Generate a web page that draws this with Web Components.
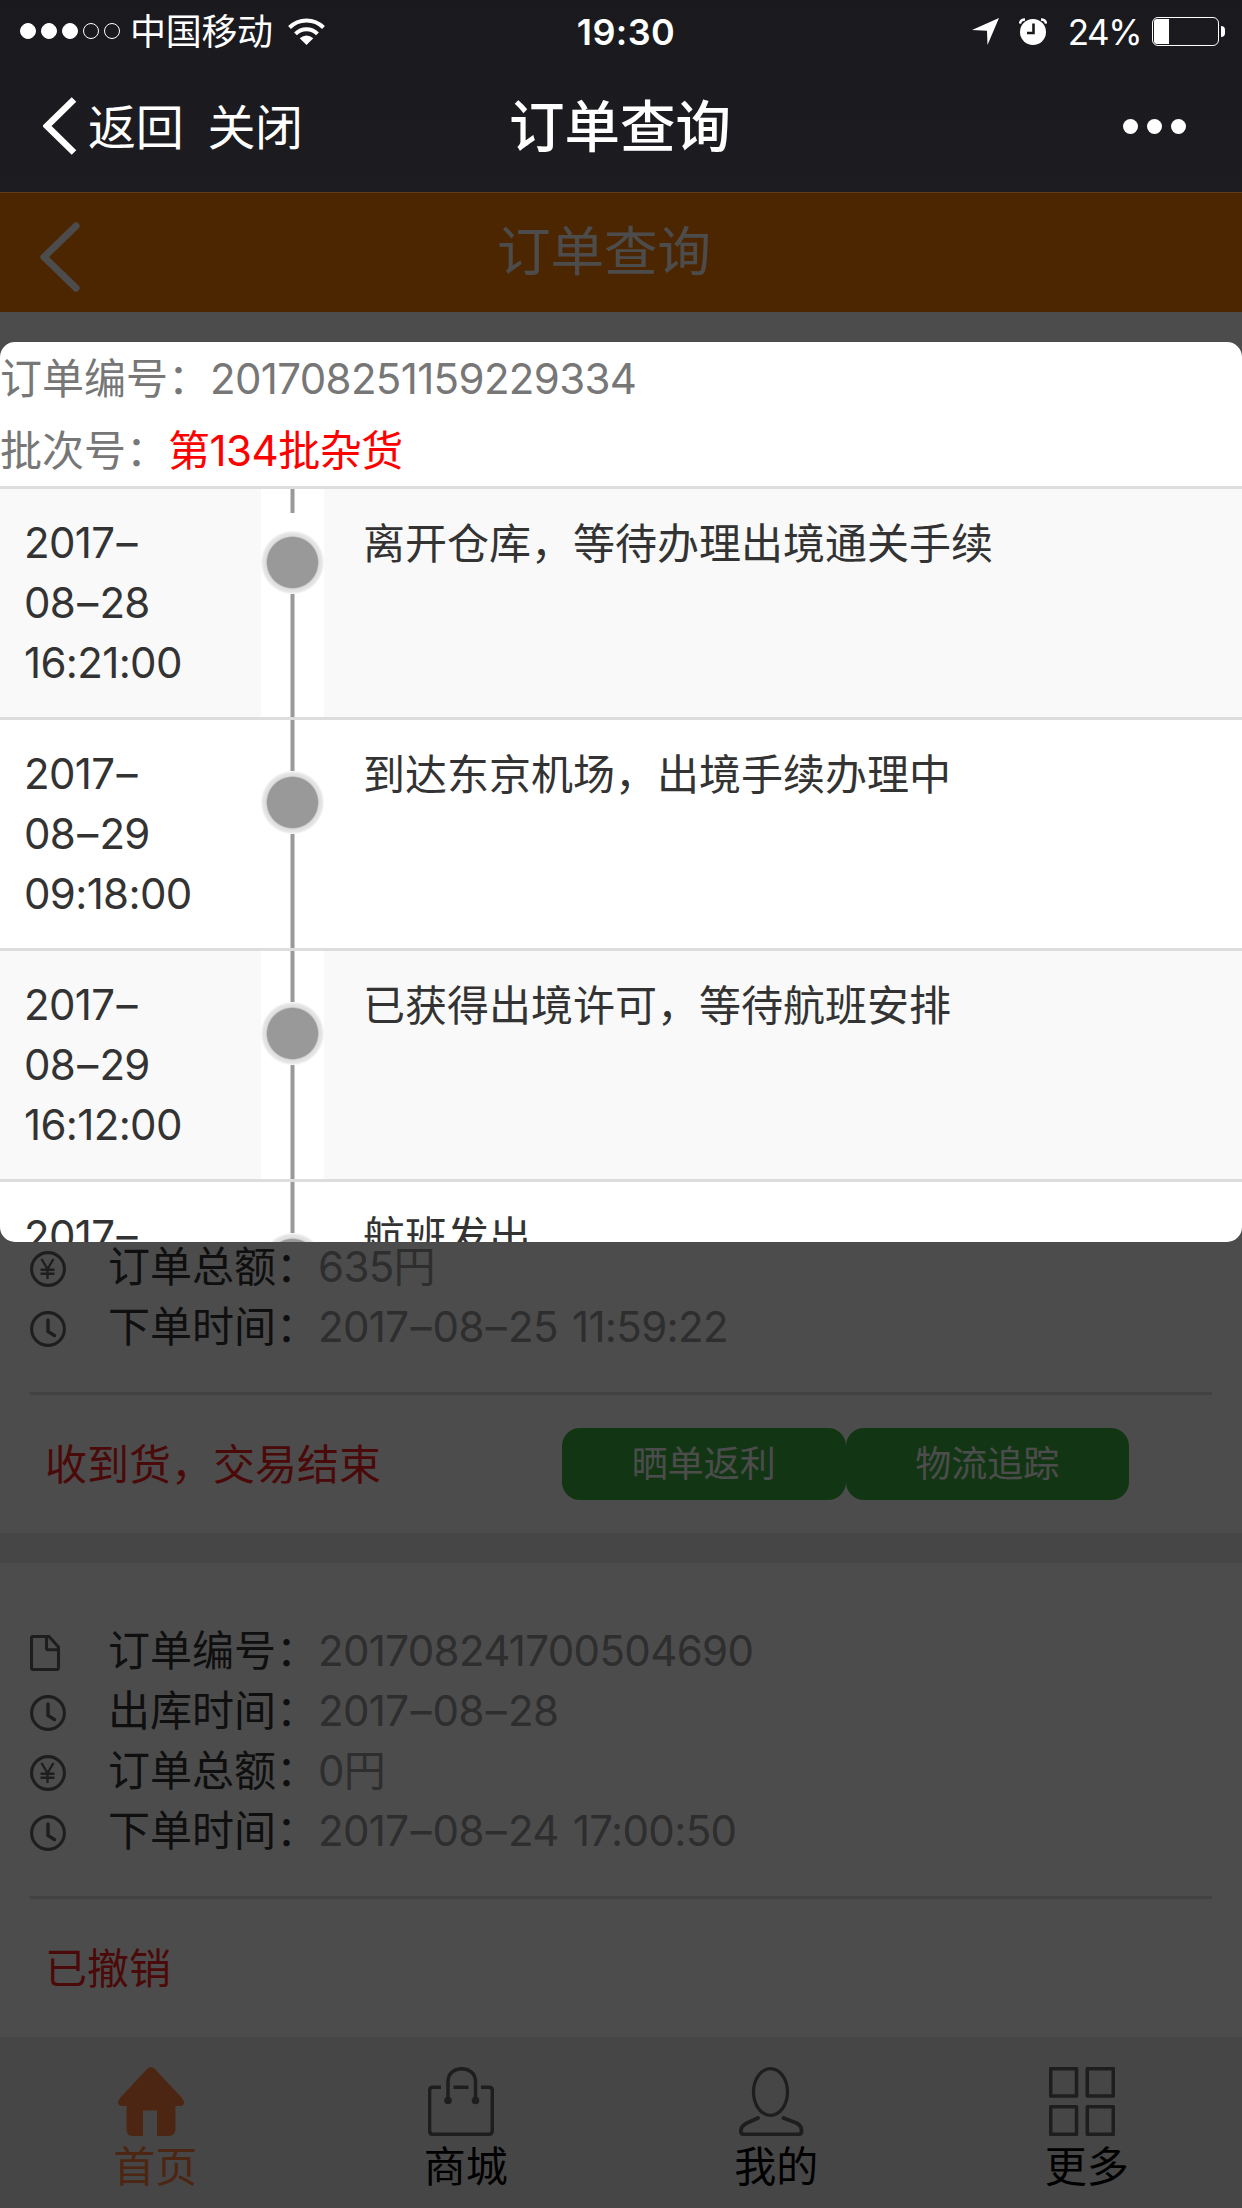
<!DOCTYPE html>
<html lang="zh-CN">
<head>
<meta charset="utf-8">
<title>订单查询</title>
<style>
  :root {
    --color-mask: rgba(0, 0, 0, 0.7);
    --color-line: #ddd;
    --color-gap: #ebebeb;
    --color-icon: #666;
  }

  body {
    margin: 0;
    width: 1242px;
    height: 2208px;
    overflow: hidden;
    background: #fff;
    font-family: Inter, "Noto Sans CJK SC", sans-serif;
    font-size: 42px;
    line-height: 60px;
    color: #333;
  }
</style>
</head>
<body>
<phone-screen>
  <status-bar slot="top" carrier="中国移动" time="19:30" battery="24"></status-bar>
  <nav-bar slot="top" back="返回" close="关闭">订单查询</nav-bar>

  <page-header>订单查询</page-header>
  <order-list>
    <order-card status="收到货，交易结束">
      <order-field icon="yen" label="订单总额：" value="635円"></order-field>
      <order-field icon="clock" label="下单时间：" value="2017–08–25 11:59:22"></order-field>
      <pill-button slot="actions">晒单返利</pill-button>
      <pill-button slot="actions">物流追踪</pill-button>
    </order-card>
    <order-card status="已撤销">
      <order-field icon="file" label="订单编号：" value="201708241700504690"></order-field>
      <order-field icon="clock" label="出库时间：" value="2017–08–28"></order-field>
      <order-field icon="yen" label="订单总额：" value="0円"></order-field>
      <order-field icon="clock" label="下单时间：" value="2017–08–24 17:00:50"></order-field>
    </order-card>
  </order-list>
  <tab-bar>
    <tab-item icon="home" active>首页</tab-item>
    <tab-item icon="bag">商城</tab-item>
    <tab-item icon="user">我的</tab-item>
    <tab-item icon="grid">更多</tab-item>
  </tab-bar>

  <track-dialog slot="overlay" number="201708251159229334" batch="第134批杂货">
    <track-step first date="2017–" day="08–28" time="16:21:00">离开仓库，等待办理出境通关手续</track-step>
    <track-step date="2017–" day="08–29" time="09:18:00">到达东京机场，出境手续办理中</track-step>
    <track-step date="2017–" day="08–29" time="16:12:00">已获得出境许可，等待航班安排</track-step>
    <track-step date="2017–">航班发出</track-step>
  </track-dialog>
</phone-screen>

<script>
// Icon drawings, keyed by name
const ICONS = {
  yen: { w: 36, h: 36, body: `
    <circle cx="18" cy="18" r="16.4" stroke-width="3.1"/>
    <path d="M11.5 8 L17.5 18 L23.5 8 M17.5 18 V28 M10.5 18.8 H24.5 M10.5 22.8 H24.5" stroke-width="2.4"/>` },
  clock: { w: 36, h: 36, body: `
    <circle cx="18" cy="18" r="16.4" stroke-width="3.1"/>
    <path d="M18 9 V20.5 L24.5 24.5" stroke-width="3.4" stroke-linecap="round"/>` },
  file: { w: 36, h: 36, body: `
    <path d="M3 1.5 H19 L28.5 12 V33 Q28.5 34.5 27 34.5 H3 Q1.5 34.5 1.5 33 V3 Q1.5 1.5 3 1.5 Z M16.5 2 V13 Q16.5 14.8 18.3 14.8 H28.5" stroke-width="3.1"/>` },
  home: { w: 66, h: 69, body: `
    <path fill="currentColor" stroke="none" d="M29.5 1.5 Q33 -1.5 36.5 1.5 L64 31 Q66 33.5 66 36 Q65.5 39 62 39 H57.5 V62 Q57 69 51 69 H39 V43.5 H25 V69 H14 Q8.5 68.5 8.5 62 V39 H4 Q0.5 39 0 36 Q0 33.5 2 31 Z"/>` },
  bag: { w: 66, h: 69, body: `
    <path d="M13 20.2 H5 Q1.6 20.2 1.6 23.5 V63.5 Q1.6 67.3 5 67.3 H61 Q64.3 67.3 64.3 63.5 V23.5 Q64.3 20.2 61 20.2 H53 M25.5 20.2 H40.5 M20 33 V14.5 C20 -2.6 47.5 -2.6 47.5 14.5 V33" stroke-width="3.5"/>
    <circle cx="20" cy="33.5" r="3.8" fill="currentColor" stroke="none"/>
    <circle cx="47.5" cy="33.5" r="3.8" fill="currentColor" stroke="none"/>` },
  user: { w: 66, h: 69, body: `
    <ellipse cx="31.5" cy="25" rx="17" ry="23.3" stroke-width="3.3"/>
    <path d="M19 51 L7 56.5 Q1.8 59.5 1.8 64.5 Q2 67.3 5 67.3 H59 Q62.5 67.3 62.5 64.5 Q63 59 57.5 56 L44.5 51" stroke-width="3.8" stroke-linecap="round"/>` },
  grid: { w: 66, h: 69, body: `
    <path d="M1.7 1.7 H27.5 V29 H1.7 Z M38.3 1.7 H64.3 V29 H38.3 Z M1.7 39.8 H27.5 V67.3 H1.7 Z M38.3 39.8 H64.3 V67.3 H38.3 Z" stroke-width="3.6" stroke-linejoin="round"/>` },
  wifi: { w: 37, h: 27, body: `
    <path d="M1.5 9.5 A24 24 0 0 1 35.5 9.5" stroke-width="4"/>
    <path d="M7.5 15.8 A15.6 15.6 0 0 1 29.5 15.8" stroke-width="4"/>
    <path fill="currentColor" stroke="none" d="M18.5 27 L11.7 20.2 Q18.5 15 25.3 20.2 Z"/>` },
  location: { w: 27, h: 27, body: `
    <path fill="currentColor" stroke="none" d="M27 0 L15.5 27 L15 12.8 L0 12 Z"/>` },
  alarm: { w: 28, h: 27, body: `
    <circle cx="14" cy="14" r="13" fill="currentColor" stroke="none"/>
    <path d="M1 5.5 Q1.5 1.5 6 1.5 M22 1.5 Q26.5 1.5 27 5.5" stroke-width="2.4"/>
    <path d="M14.5 5.5 V15 H8" stroke="#1b1a1f" stroke-width="2.6"/>` },
  back: { w: 34, h: 58, body: `
    <path d="M31 2.5 L4 29 L31 55.5" stroke-width="6.5"/>` },
  chevron: { w: 40, h: 70, body: `
    <path d="M36 4 L4 35 L36 66" stroke-width="7" stroke-linecap="round" stroke-linejoin="round"/>` }
};

/** Base class: opens the shadow root and fills it from template() */
class UiElement extends HTMLElement {
  connectedCallback() {
    if (this.shadowRoot) return;
    this.attachShadow({ mode: 'open' }).innerHTML = this.template().trim();
  }

  attr(name) {
    return this.getAttribute(name) || '';
  }
}

class UiIcon extends UiElement {
  template() {
    const icon = ICONS[this.attr('name')];
    return `
      <style>
        :host { display: block; flex: none; line-height: 0; }
      </style>
      <svg width="${icon.w}" height="${icon.h}" viewBox="0 0 ${icon.w} ${icon.h}" fill="none" stroke="currentColor">${icon.body}</svg>
    `;
  }
}

/** Number or date, set tight with a little air around its dashes */
class NumText extends UiElement {
  template() {
    return `
      <style>
        :host {
          display: inline;
          letter-spacing: -0.65px;
          word-spacing: 3px;
          white-space: nowrap;
        }
        i { font-style: normal; letter-spacing: 0; margin: 0 1.2px 0 2px; }
      </style>${this.attr('value').replace(/–/g, '<i>–</i>')}`;
  }
}

class PhoneScreen extends UiElement {
  template() {
    return `
      <style>
        :host { display: flex; flex-direction: column; width: 1242px; height: 2208px; }
        .top { flex: none; height: 192px; background: linear-gradient(#1a191e, #1d1c21); color: #fff; }
        .view { position: relative; flex: 1; min-height: 0; display: flex; flex-direction: column; }
        .mask {
          position: absolute;
          inset: 0;
          box-sizing: border-box;
          border-top: 1px solid rgba(150, 110, 80, 0.3);
          background: var(--color-mask);
        }
      </style>
      <div class="top"><slot name="top"></slot></div>
      <div class="view">
        <slot></slot>
        <div class="mask"><slot name="overlay"></slot></div>
      </div>
    `;
  }
}

class StatusBar extends UiElement {
  template() {
    const dots = [1, 1, 1, 0, 0].map((on) => `<i class="${on ? 'on' : ''}"></i>`).join('');
    return `
      <style>
        :host {
          display: grid;
          grid-template-columns: 1fr auto 1fr;
          align-items: center;
          height: 60px;
          padding: 0 17px 0 20px;
          font-size: 36px;
          line-height: 60px;
        }
        div { display: flex; align-items: center; }
        .signal { gap: 5px; margin-right: 10px; }
        i { box-sizing: border-box; width: 16px; height: 16px; border: 1.5px solid #fff; border-radius: 50%; }
        i.on { background: #fff; }
        .carrier { padding-top: 2px; letter-spacing: -0.3px; }
        .wifi { margin-left: 15px; }
        .time, .percent { padding-top: 1px; }
        .time { font-weight: 600; padding-left: 7px; letter-spacing: 0.4px; }
        .right { justify-content: flex-end; }
        .alarm { margin: 0 21px 0 20px; }
        .percent { font-size: 35px; letter-spacing: -1.5px; margin-right: 11px; }
        .battery { box-sizing: border-box; width: 67px; height: 29px; padding: 1px; border: 1.5px solid #fff; border-radius: 6px; }
        .level { height: 100%; border-radius: 3px 0 0 3px; background: #fff; }
        .cap { width: 4px; height: 11px; margin-left: 2px; border-radius: 0 4px 4px 0; background: #fff; }
      </style>
      <div class="left">
        <div class="signal">${dots}</div>
        <span class="carrier">${this.attr('carrier')}</span>
        <ui-icon class="wifi" name="wifi"></ui-icon>
      </div>
      <span class="time">${this.attr('time')}</span>
      <div class="right">
        <ui-icon name="location"></ui-icon>
        <ui-icon class="alarm" name="alarm"></ui-icon>
        <span class="percent">${this.attr('battery')}%</span>
        <div class="battery"><div class="level" style="width: ${this.attr('battery')}%"></div></div>
        <div class="cap"></div>
      </div>
    `;
  }
}

class NavBar extends UiElement {
  template() {
    return `
      <style>
        :host {
          display: grid;
          grid-template-columns: 1fr auto 1fr;
          align-items: center;
          height: 132px;
          padding: 0 56px 0 43px;
          font-size: 48px;
        }
        .left { display: flex; align-items: center; margin-right: -13px; }
        .left span { margin-left: 11px; padding-top: 3px; letter-spacing: -0.3px; }
        .left .close { margin-left: 24px; }
        .title { font-size: 55.5px; font-weight: 500; padding: 1px 0 0 11px; }
        .more { display: flex; justify-content: flex-end; gap: 9px; }
        i { width: 15px; height: 15px; border-radius: 50%; background: #fff; }
      </style>
      <div class="left">
        <ui-icon name="back"></ui-icon>
        <span>${this.attr('back')}</span>
        <span class="close">${this.attr('close')}</span>
      </div>
      <div class="title"><slot></slot></div>
      <div class="more"><i></i><i></i><i></i></div>
    `;
  }
}

class PageHeader extends UiElement {
  template() {
    return `
      <style>
        :host {
          flex: none;
          display: grid;
          grid-template-columns: 1fr auto 1fr;
          align-items: center;
          height: 120px;
          padding: 0 74px 0 40px;
          background: #ff8000;
          color: #fff;
          font-size: 53.5px;
        }
        ui-icon { padding-top: 9px; }
      </style>
      <ui-icon name="chevron"></ui-icon>
      <span><slot></slot></span>
    `;
  }
}

class OrderList extends UiElement {
  template() {
    return `
      <style>
        :host {
          flex: 1;
          min-height: 0;
          display: flex;
          flex-direction: column;
          justify-content: flex-end;
          gap: 30px;
          background: linear-gradient(#fff 1100px, var(--color-gap) 0);
        }
      </style>
      <slot></slot>
    `;
  }
}

class OrderCard extends UiElement {
  template() {
    return `
      <style>
        :host { display: block; padding: 57px 30px 0; background: #fff; }
        .foot {
          display: flex;
          align-items: center;
          height: 138px;
          margin-top: 36px;
          padding: 0 83px 0 15px;
          border-top: 3px solid var(--color-line);
        }
        .status { flex: 1; padding-top: 2px; color: #fc2222; }
      </style>
      <slot></slot>
      <div class="foot">
        <span class="status">${this.attr('status')}</span>
        <slot name="actions"></slot>
      </div>
    `;
  }
}

class OrderField extends UiElement {
  template() {
    return `
      <style>
        :host { display: flex; align-items: center; height: 60px; color: #999; }
        ui-icon { margin-right: 42px; padding-top: 5px; color: var(--color-icon); }
        span { padding-top: 1px; }
        .label { color: #333; }
      </style>
      <ui-icon name="${this.attr('icon')}"></ui-icon>
      <span class="label">${this.attr('label')}</span>
      <span><num-text value="${this.attr('value')}"></num-text></span>
    `;
  }
}

class PillButton extends UiElement {
  template() {
    return `
      <style>
        :host {
          width: 283.5px;
          height: 72px;
          border-radius: 18px;
          background: #3cb443;
          color: #fff;
          font-size: 36px;
          line-height: 73px;
          text-align: center;
        }
      </style>
      <slot></slot>
    `;
  }
}

class TabBar extends UiElement {
  template() {
    return `
      <style>
        :host {
          flex: none;
          display: grid;
          grid-template-columns: repeat(4, 1fr);
          height: 171px;
          background: var(--color-gap);
        }
      </style>
      <slot></slot>
    `;
  }
}

class TabItem extends UiElement {
  template() {
    return `
      <style>
        :host { display: flex; flex-direction: column; align-items: center; padding-top: 30px; color: #000; }
        :host([active]) { color: #ff8042; }
        ui-icon { margin-right: 9px; color: var(--color-icon); }
        :host([active]) ui-icon { color: inherit; }
        span { padding-top: 1px; }
      </style>
      <ui-icon name="${this.attr('icon')}"></ui-icon>
      <span><slot></slot></span>
    `;
  }
}

class TrackDialog extends UiElement {
  template() {
    return `
      <style>
        :host {
          display: block;
          box-sizing: border-box;
          height: 900px;
          margin-top: 149px;
          overflow: hidden;
          border-radius: 15px;
          background: #fff;
        }
        p { margin: 0; height: 72px; line-height: 74px; color: #777; }
        .batch { color: #f00; letter-spacing: -0.5px; }
      </style>
      <p>订单编号：<num-text value="${this.attr('number')}"></num-text></p>
      <p>批次号：<span class="batch">${this.attr('batch')}</span></p>
      <slot></slot>
    `;
  }
}

class TrackStep extends UiElement {
  template() {
    const lines = ['date', 'day', 'time']
      .filter((name) => this.hasAttribute(name))
      .map((name) => `<div><num-text value="${this.attr(name)}"></num-text></div>`)
      .join('');
    return `
      <style>
        :host {
          display: grid;
          grid-template-columns: 261px 63px 1fr;
          height: 228px;
          border-top: 3px solid var(--color-line);
        }
        :host(:nth-child(odd)) { background: #f9f9f9; }
        .when { padding: 24px 0 0 24px; }
        .what { padding: 25px 0 0 39px; }
        .rail { display: flex; flex-direction: column; background: #fff; }
        .stem {
          flex: none;
          height: 51px;
          background: linear-gradient(to right, #fff 29px, #ccc 0 30px, #999 0 33px, #ccc 0 34px, #fff 0);
        }
        :host([first]) .stem { height: 24px; margin-bottom: 18px; }
        .dot {
          flex: none;
          height: 63px;
          background: radial-gradient(circle, #999 25px, #ddd 26.5px, #e6e6e6 29.5px, #fff 32px);
        }
        .stem:last-child, :host([first]) .stem:last-child { flex: 1; height: auto; margin: 0; }
      </style>
      <div class="when">${lines}</div>
      <div class="rail"><div class="stem"></div><div class="dot"></div><div class="stem"></div></div>
      <div class="what"><slot></slot></div>
    `;
  }
}

customElements.define('ui-icon', UiIcon);
customElements.define('num-text', NumText);
customElements.define('phone-screen', PhoneScreen);
customElements.define('status-bar', StatusBar);
customElements.define('nav-bar', NavBar);
customElements.define('page-header', PageHeader);
customElements.define('order-list', OrderList);
customElements.define('order-card', OrderCard);
customElements.define('order-field', OrderField);
customElements.define('pill-button', PillButton);
customElements.define('tab-bar', TabBar);
customElements.define('tab-item', TabItem);
customElements.define('track-dialog', TrackDialog);
customElements.define('track-step', TrackStep);
</script>
</body>
</html>
